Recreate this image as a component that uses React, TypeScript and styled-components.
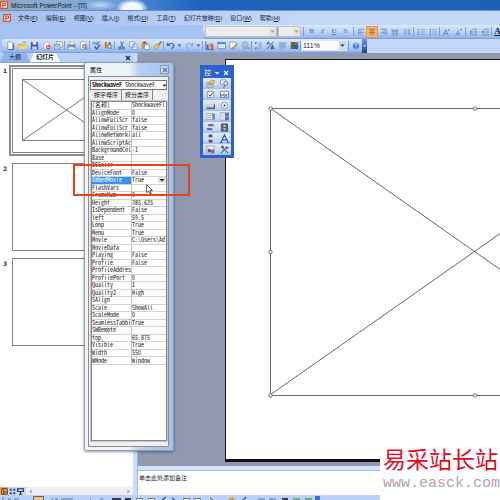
import React from "react";
import styled, { createGlobalStyle } from "styled-components";

const Global = createGlobalStyle`
  *, *::before, *::after { box-sizing: border-box; }
  body { margin: 0; background: #fff; }
  button, select, input, textarea { font: inherit; color: inherit; margin: 0; padding: 0; border: 0; background: none; }
`;

const Page = styled.div`
  position: relative;
  display: flex;
  flex-direction: column;
  height: 100vh;
  overflow: hidden;
  background: #a9c5f3;
  color: #1b2233;
  font: 6px/8px "Liberation Sans", "Noto Sans CJK SC", sans-serif;
`;

const TitleBar = styled.header`
  display: flex;
  align-items: center;
  gap: 3px;
  height: 11px;
  flex: none;
  border-bottom: 1px solid #6f8fbd;
  background:
    radial-gradient(ellipse 18px 5px at 100px 5px, #c9e8f6cc, transparent),
    radial-gradient(ellipse 16px 9px at 132px 8px, #f3fbff 55%, transparent),
    linear-gradient(90deg, #93aac2 0, #86abd6 70px, #6d9fdc 110px, #3f7fd0 150px, #1d62bd 200px, #1a63b4 100%);
`;

const TitleText = styled.h1`
  margin: 0;
  font: 6px/9px Inter, "Liberation Sans", sans-serif;
  color: #0c1524;
  white-space: nowrap;
`;

const MenuBar = styled.nav`
  display: flex;
  align-items: center;
  gap: 8px;
  height: 14px;
  flex: none;
  padding-left: 3px;
  background: linear-gradient(90deg, #a3c0f2, #c3d7f8 60%);
`;

const MenuItem = styled.button`
  white-space: nowrap;
  u { text-underline-offset: 1px; }
`;

const MenuItems = styled.div`
  display: flex;
  gap: 8px;
  margin-left: -1px;
`;

const FormatRow = styled.div`
  height: 14px;
  flex: none;
  display: flex;
  padding-left: 203px;
  background: #a6c3f4;
`;

const StandardRow = styled.div`
  height: 14px;
  flex: none;
  display: flex;
  padding-left: 2px;
  background: linear-gradient(90deg, #a6c3f4, #c3d7f8 60%);
`;

const Bar = styled.div<{ $grow?: boolean }>`
  display: flex;
  align-items: center;
  flex: ${p => (p.$grow ? "1" : "none")};
  min-width: 0;
  overflow: hidden;
  padding-left: 2px;
  border-bottom: 1px solid #7f9fd8;
  border-radius: 3px 0 0 3px;
  background: linear-gradient(#dbe8fd, #bad1f7 55%, #8fb2ec);
`;

const Tool = styled.button<{ $active?: boolean; $w?: number }>`
  width: ${p => p.$w ?? 12}px;
  height: 12px;
  flex: none;
  display: flex;
  align-items: center;
  justify-content: center;
  background: ${p => (p.$active ? "#fbb467" : "none")};
  box-shadow: ${p => (p.$active ? "inset 0 0 0 1px #d59a62" : "none")};
`;

const Sep = styled.i<{ $gap?: number }>`
  width: 1px;
  height: 9px;
  flex: none;
  margin: 0 ${p => p.$gap ?? 0}px;
  background: #7f9ed6;
`;

const Letter = styled.span<{ $size?: number; $color?: string }>`
  font: bold ${p => p.$size ?? 7}px/9px "Liberation Serif", serif;
  color: ${p => p.$color ?? "#7383a8"};
`;

const ComboBox = styled.label<{ $w: number; $off?: boolean }>`
  position: relative;
  display: flex;
  flex: none;
  width: ${p => p.$w}px;
  height: 11px;
  background: ${p => (p.$off ? "#ececee" : "#fff")};
  border: 1px solid ${p => (p.$off ? "#c4c4c4" : "#dfe9fa")};
  select {
    appearance: none;
    width: 100%;
    padding-left: 1px;
    outline: 0;
    font: 7px/9px "Liberation Sans", sans-serif;
    color: #222;
  }
  svg {
    position: absolute;
    right: 0;
    top: 0;
    pointer-events: none;
    background: ${p => (p.$off ? "#e6e3d6" : "#c5d9f9")};
  }
`;

const EndCap = styled.button`
  width: 5px;
  height: 14px;
  background: linear-gradient(#6c97e2, #1c4598);
`;

const Workspace = styled.main`
  flex: 1;
  min-height: 0;
  display: flex;
`;

const SidePane = styled.aside`
  width: 133px;
  flex: none;
  display: flex;
  flex-direction: column;
  background: #fff;
`;

const TabStrip = styled.div`
  height: 10px;
  flex: none;
  display: flex;
  align-items: flex-end;
  background: #b9d1f7;
  border-bottom: 1px solid #8aa4cf;
`;

const PaneTab = styled.button<{ $active?: boolean }>`
  height: 9px;
  width: 30px;
  line-height: 9px;
  color: #10182a;
  font-weight: ${p => (p.$active ? 700 : 400)};
  background: ${p => (p.$active ? "#fff" : "#8fb3ea")};
  clip-path: polygon(4px 0, calc(100% - 4px) 0, 100% 100%, 0 100%);
  white-space: nowrap;
`;

const PaneClose = styled.button`
  margin-left: auto;
  width: 10px;
  height: 9px;
  display: flex;
  align-items: center;
  justify-content: center;
`;

const Thumbs = styled.ol`
  list-style: none;
  margin: 0;
  padding: 2px 5px 0 3px;
  flex: 1;
  display: flex;
  flex-direction: column;
  gap: 7px;
`;

const ThumbItem = styled.li`
  display: flex;
  font: bold 6px/8px "DejaVu Sans", sans-serif;
  color: #333;
  > span { width: 6px; padding-top: 2px; }
`;

const ThumbButton = styled.button<{ $active?: boolean }>`
  flex: 1;
  height: ${p => (p.$active ? 91 : 88)}px;
  padding: ${p => (p.$active ? "1px" : "0 3px")};
  border: ${p => (p.$active ? "2px solid #8b8b8b" : "0")};
  display: flex;
`;

const ThumbPage = styled.span`
  flex: 1;
  align-self: stretch;
  overflow: hidden;
  border: 1px solid #858585;
  background: #fff;
  svg { display: block; }
`;

const ViewRow = styled.div`
  height: 8px;
  flex: none;
  display: flex;
  align-items: center;
  background: #c5d9f8;
`;

const ViewButton = styled.button<{ $active?: boolean }>`
  width: 8px;
  height: 8px;
  display: flex;
  align-items: center;
  justify-content: center;
  background: ${p => (p.$active ? "#f0a45c" : "none")};
`;

const ScrollTrack = styled.div`
  flex: 1;
  height: 8px;
  margin-left: 2px;
  padding: 0 2px;
  background: #efefef;
  display: flex;
  align-items: center;
  justify-content: space-between;
`;

const Splitter = styled.div`
  width: 5px;
  flex: none;
  background: #c9defb;
  border-right: 1px solid #9bb5df;
`;

const Center = styled.section`
  flex: 1;
  min-width: 0;
  display: flex;
  flex-direction: column;
`;

const Stage = styled.div`
  flex: 1;
  min-height: 0;
  display: flex;
  background: #9099ae;
  padding: 6px 0 4px 87px;
`;

const Slide = styled.div`
  flex: 1;
  min-width: 0;
  overflow: hidden;
  background: #fff;
  border: solid #111;
  border-width: 1px 0 3px 1px;
  padding: 45px 0 0 41px;
  svg { display: block; flex: none; }
`;

const NotesSplitter = styled.div`
  height: 5px;
  flex: none;
  background: #d3e3fa;
  border-bottom: 1px solid #9db7de;
`;

const Notes = styled.textarea`
  height: 24px;
  flex: none;
  resize: none;
  outline: 0;
  overflow: hidden;
  padding: 3px 1px;
  background: #fff;
  font: 6px/8px "Noto Sans CJK SC", sans-serif;
  &::placeholder { color: #222; opacity: 1; }
`;

const DrawBar = styled.footer`
  height: 5px;
  flex: none;
  overflow: hidden;
  background: #bad2f7;
  svg { display: block; }
`;

/* floating windows */

const Dialog = styled.section`
  position: absolute;
  left: 84px;
  top: 62px;
  width: 90px;
  height: 389px;
  display: flex;
  flex-direction: column;
  padding: 2px 4px 3px 3px;
  border: 1px solid #8f9db0;
  border-radius: 2px;
  background: linear-gradient(90deg, #f0f4f6 0, #e8f3fa 44px, #b7cff0 54px, #a4c1ed 100%);
  box-shadow: 0 1px 3px #00000066;
`;

const DialogTitle = styled.div`
  height: 11px;
  flex: none;
  display: flex;
  justify-content: space-between;
  padding-left: 2px;
  h2 { margin: 0; font: 6px/10px "Noto Sans CJK SC", sans-serif; color: #000; }
`;

const DialogClose = styled.button`
  width: 9px;
  height: 9px;
  display: flex;
  align-items: center;
  justify-content: center;
  border: 1px solid #8999b4;
  background: #c4d5ee;
`;

const DialogBody = styled.div`
  flex: 1;
  min-height: 0;
  display: flex;
  flex-direction: column;
  border: 1px solid #8b8f94;
  background: #f0f0f0;
  padding: 3px 1px 2px 1px;
`;

const mono = `"Noto Sans Mono CJK SC", "Liberation Mono", monospace`;

const ObjectPicker = styled.button`
  height: 10px;
  flex: none;
  display: flex;
  align-items: center;
  gap: 3px;
  padding-left: 1px;
  border: 1px solid #777;
  background: #fff;
  white-space: nowrap;
  text-align: left;
  color: #111;
  font: 6px/8px ${mono};
  span { flex: 1; }
  svg { flex: none; }
`;

const DialogTabs = styled.div`
  height: 11px;
  flex: none;
  display: flex;
  align-items: flex-start;
  padding-left: 1px;
`;

const DialogTab = styled.button`
  height: 10px;
  padding: 0 3px;
  font: 6px/8px "Noto Sans CJK SC", sans-serif;
  color: #111;
  border-right: 1px solid #888;
`;

const Sheet = styled.div`
  flex: 1;
  min-height: 0;
  margin: 0 0 3px 1px;
  border: 1px solid #85878a;
  background: #fff;
  box-shadow: 0 0 0 1px #c9c9c9;
`;

const PropTable = styled.table`
  width: 100%;
  height: 263px;
  table-layout: fixed;
  border-spacing: 0;
  font: 6px/6px ${mono};
  color: #222;
  th, td {
    padding: 0;
    text-align: left;
    font-weight: 400;
    white-space: nowrap;
    border-bottom: 1px solid #d2d2d2;
  }
  th { width: 40px; border-right: 1px solid #c4c4c4; }
`;

const NameCell = styled.th<{ $active?: boolean }>`
  background: ${p => (p.$active ? "#3291f4" : "none")};
  color: ${p => (p.$active ? "#fff" : "inherit")};
`;

const ValueSelect = styled.span`
  display: flex;
  justify-content: space-between;
  height: 6px;
  select { appearance: none; outline: 0; flex: 1; height: 6px; line-height: 6px; }
`;

const Palette = styled.section`
  position: absolute;
  left: 200px;
  top: 65px;
  width: 34px;
  height: 93px;
  border: 2px solid #2862d3;
  border-bottom-width: 3px;
  background: #2862d3;
  padding: 0 1px;
  display: flex;
  flex-direction: column;
`;

const PaletteHead = styled.div`
  height: 11px;
  flex: none;
  display: flex;
  align-items: center;
  justify-content: space-between;
  padding: 0 2px 0 1px;
  color: #fff;
  font-size: 7px;
  button { display: flex; }
`;

const PaletteGrid = styled.div`
  flex: 1;
  display: grid;
  grid-template-columns: 1fr 1fr;
  grid-auto-rows: 11px;
`;

const PaletteButton = styled.button`
  display: flex;
  align-items: center;
  justify-content: center;
  background: linear-gradient(#e0ebfe, #c3d8f9 70%, #9dbdf0);
`;

const Highlight = styled.div`
  position: absolute;
  left: 73px;
  top: 164px;
  width: 117px;
  height: 32px;
  border: 2px solid #e8431c;
`;

const Pointer = styled.svg`
  position: absolute;
  left: 146px;
  top: 184px;
`;

const Stamp = styled.a`
  position: absolute;
  right: 0;
  bottom: 0;
  width: 120px;
  height: 60px;
  padding: 1px 0 0 3px;
  background: #fff;
  text-decoration: none;
  white-space: nowrap;
`;

const StampName = styled.span`
  display: block;
  font: 23px/34px "Noto Sans CJK SC", sans-serif;
  color: #e60a1e;
`;

const StampUrl = styled.span`
  display: block;
  font: 15px/18px "Liberation Mono", monospace;
  color: #b5a3a3;
`;

type G = { s?: number; children: React.ReactNode };
const Glyph = ({ s = 10, children }: G) => (
  <svg width={s} height={s} viewBox="0 0 10 10" fill="none" aria-hidden="true">{children}</svg>
);

const Down = ({ c = "#222", w = 7, h = 9 }: { c?: string; w?: number; h?: number }) => (
  <svg width={w} height={h} viewBox="0 0 7 9" aria-hidden="true"><path d="M1.5 3.5h4L3.500 5.800z" fill={c} /></svg>
);

const Cross = ({ c, s = 6 }: { c: string; s?: number }) => (
  <svg width={s} height={s} viewBox="0 0 6 6" aria-hidden="true"><path d="M1 1l4 4M5 1L1 5" stroke={c} strokeWidth="1.200" /></svg>
);

const PptIcon = ({ s = 8 }: { s?: number }) => (
  <Glyph s={s}>
    <rect x="0" y="0" width="10" height="10" rx="1" fill="#d2562a" />
    <rect x="1.500" y="1.500" width="7" height="7" fill="#fbe3d5" />
    <path d="M3.500 8V2.500h2a1.500 1.500 0 010 3h-2" stroke="#c8451e" strokeWidth="1.300" />
  </Glyph>
);

const icons: Record<string, React.ReactNode> = {
  new: <><path d="M2 1h4l2 2v6.500H2z" fill="#fff" stroke="#7a8aac" strokeWidth=".8" /><path d="M8 3v6.500H3" stroke="#33466e" /></>,
  open: <><path d="M0.500 9V3h3l1 1h4v5z" fill="#e8a92e" /><path d="M2 5h8L8 9H.5z" fill="#ffd866" /><path d="M5 2q2-2 4 .5" stroke="#3f9a48" /></>,
  save: <><path d="M1 1h8v8.500H1z" fill="#4b56c0" /><path d="M3 1h4v3H3z" fill="#f4f6ff" /><path d="M2.500 6h5v3.500h-5z" fill="#cdd5f2" /></>,
  perm: <><path d="M2 1h4l2 2v6H2z" fill="#fff" stroke="#8b96ad" strokeWidth=".7" /><circle cx="7" cy="7" r="2.500" fill="#dd4a32" /><path d="M5.500 7h3" stroke="#fff" /></>,
  mail: <><path d="M3 .5h5l1.500 2V7H3z" fill="#eef2fb" stroke="#7c8aac" strokeWidth=".7" /><path d="M.5 4h6v5h-6z" fill="#d3dcf0" stroke="#6a7897" strokeWidth=".7" /><path d="M.5 4l3 3 3-3" stroke="#6a7897" strokeWidth=".7" /></>,
  print: <><path d="M3 1h5v3H3z" fill="#fff" stroke="#7c8aac" strokeWidth=".6" /><path d="M.5 4h9v4h-9z" fill="#8590a8" /><path d="M2 7h6v2H2z" fill="#e9eefa" /><path d="M6.500 5.500H9" stroke="#36b050" strokeWidth="1.500" /></>,
  preview: <><path d="M1.500.5h4l2 2V9h-6z" fill="#fff" stroke="#7c8aac" strokeWidth=".7" /><circle cx="6" cy="6" r="2" fill="#bcd3f2" stroke="#4c5872" /><path d="M7.500 7.500l2 2" stroke="#b8862c" strokeWidth="1.300" /></>,
  spell: <><path d="M.5 4l1.500-3L3.500 4M4.500 1v3h1.500V1M7 4V1h2" stroke="#5a6682" strokeWidth=".8" /><path d="M3 6l2 3 4-5" stroke="#2f58c0" strokeWidth="1.500" /></>,
  research: <><path d="M1 1h2v7H1z" fill="#c85a3a" /><path d="M3 1h2.500v7H3z" fill="#e4c455" /><path d="M5.500 1h2v7h-2z" fill="#506cc0" /><circle cx="6" cy="6" r="2" fill="#dfe9fa" stroke="#566" /><path d="M7.500 7.500l2 2" stroke="#b8862c" /></>,
  cut: <><path d="M7.500 0.500L3.500 7M4 .5L6.500 7" stroke="#52648c" /><circle cx="3" cy="8" r="1.300" stroke="#2f58c0" /><circle cx="7" cy="8" r="1.300" stroke="#2f58c0" /></>,
  copy: <><path d="M.8.8h5v6h-5zM3.800 3.500h5v6h-5z" fill="#f5f8ff" stroke="#7690c4" strokeWidth=".8" /><path d="M5 5.500h2.500M5 7h2.500" stroke="#8fa5d2" strokeWidth=".6" /></>,
  paste: <><path d="M.8 1.500h6.500v7.500H.8z" fill="#d69440" /><path d="M2.500.5h3v2h-3z" fill="#6c5a43" /><path d="M4 4h5.500v5.500H4z" fill="#f4f7ff" stroke="#6e82ad" strokeWidth=".7" /></>,
  brush: <><path d="M9.500.5L6 4.500" stroke="#8a6838" strokeWidth="1.500" /><path d="M4 3l3 3-3 3.500L.8 7z" fill="#f0c64a" stroke="#a8862a" strokeWidth=".6" /></>,
  undo: <><path d="M2 4.500q4-4 6.500 0 .5 3-2.500 4" stroke="#2f62d0" strokeWidth="1.300" /><path d="M1 1.500v4h4z" fill="#2f62d0" /></>,
  redo: <><path d="M8 4.500q-4-4-6.500 0-.5 3 2.500 4" stroke="#92a9d2" strokeWidth="1.300" /><path d="M9 1.500v4H5z" fill="#92a9d2" /></>,
  chart: <><path d="M.8.500v9H10" stroke="#5c6a8a" /><path d="M2 4h2v5H2z" fill="#3b62c8" /><path d="M4.500 2h2v7h-2z" fill="#e2b02e" /><path d="M7 3h2v6H7z" fill="#d6452e" /></>,
  table: <><path d="M1 1.500h8.500v7H1z" fill="#fff" stroke="#5876b4" strokeWidth=".8" /><path d="M1 1.500h8.500v2H1z" fill="#5a83d8" /><path d="M1 6h8M4 3v5M7 3v5" stroke="#a9bde0" strokeWidth=".6" /></>,
  tborder: <><path d="M1 1h7v7H1z" fill="#f4f7fc" stroke="#7d8fb4" strokeWidth=".8" /><path d="M9.500 3L5 8.500 3 9.500l1-2.500z" fill="#e0a83c" stroke="#7d6435" strokeWidth=".5" /></>,
  link: <><circle cx="4.500" cy="4" r="3.300" fill="#b2c3df" stroke="#8ea2c6" /><path d="M3 8h3m1 0h3" stroke="#8595b3" strokeWidth="2" /></>,
  expand: <><path d="M1 1h2v2H1zM1 7h2v2H1z" fill="#6d82ad" /><path d="M4 2h5M5 4h4M5 6h4M4 8h5" stroke="#8094bd" strokeWidth=".8" /></>,
  fmt: <><path d="M1 9L8 1" stroke="#4a5678" /><path d="M1 4l1.500-3L4 4" stroke="#333f5d" /><path d="M5.500 9l1.500-4 2 4M6 8h3" stroke="#2d4db0" strokeWidth="1.200" /></>,
  grid: <><path d="M1 1h8v8H1z" fill="#9bbbe9" /><path d="M1 3.500h8M1 6h8M3.500 1v8M6 1v8" stroke="#7196d5" strokeWidth=".5" /></>,
  color: <><path d="M1 1h8v8H1z" fill="#334" /><path d="M1 1h4v4H1z" fill="#d93325" /><path d="M5 1h4v4H5z" fill="#34a53c" /><path d="M1 5h4v4H1z" fill="#1a8f3c" /><path d="M5 5h4v4H5z" fill="#2d55c4" /></>,
  help: <><circle cx="5" cy="5" r="4" fill="#3c6fd8" stroke="#9fbced" strokeWidth=".7" /><path d="M3.500 4q0-1.500 1.500-1.500T6.500 4Q5 4.500 5 6M5 7v1" stroke="#fff" /></>,
  left: <path d="M1 1.500h8M1 3.500h5M1 5.500h8M1 7.500h5" stroke="#7488b3" />,
  center: <path d="M1 1.500h8M2.500 3.500h5M1 5.500h8M2.500 7.500h5" stroke="#8a6434" />,
  right: <path d="M1 1.500h8M4 3.500h5M1 5.500h8M4 7.500h5" stroke="#7488b3" />,
  dist: <path d="M1 1v2h8V1M1 4.500h8M1 6.500h8M1 8.500h8M3 1v8M7 1v8" stroke="#7488b3" strokeWidth=".8" />,
  vert: <path d="M1.500 1v8M4 1v8M6.500 1v6M8 1v6l1 2M6 8h4" stroke="#7488b3" strokeWidth=".8" />,
  nums: <><path d="M1.500 1v2M1.500 4v2M1.500 7v2" stroke="#5d72a3" /><path d="M4 2h6M4 5h6M4 8h6" stroke="#8498c2" strokeWidth=".9" /></>,
  bullets: <><path d="M1 2h1.500M1 5h1.500M1 8h1.500" stroke="#5d72a3" strokeWidth="1.500" /><path d="M4 2h6M4 5h6M4 8h6" stroke="#8498c2" strokeWidth=".9" /></>,
  grow: <><path d="M0.500 9.500L3.500 2l3 7.500M1.500 7h4" stroke="#7383a8" strokeWidth="1.200" /><path d="M6 3l1.500-2L9 3z" fill="#5a6c98" /></>,
  shrink: <><path d="M1 9.500l2.500-6 2.500 6M2 7.500h3" stroke="#7383a8" /><path d="M6 1.500h3L7.500 3.500z" fill="#5a6c98" /></>,
  outdent: <><path d="M4 1.500h6M6 4h4M6 6h4M1 8.500h9" stroke="#7488b3" /><path d="M5 5H1m2-2L1 5l2 2" stroke="#5470ac" /></>,
  indent: <><path d="M4 1.500h6M6 4h4M6 6h4M1 8.500h9" stroke="#7488b3" /><path d="M0 5h4M2.500 3l2 2-2 2" stroke="#5470ac" /></>,
};

const I = ({ n, s }: { n: string; s?: number }) => <Glyph s={s}>{icons[n]}</Glyph>;

const standard: (string | null)[] = [
  "new", "open", "save", "perm", "mail", null, "print", "preview", null, "spell", "research", null,
  "cut", "copy", "paste", "brush", null, "undo", "v", "redo", "v", null,
  "chart", "table", "tborder", "link", null, "expand", "fmt", "grid", "color", null,
];

const menus: [string, string][] = [
  ["文件", "F"], ["编辑", "E"], ["视图", "V"], ["插入", "I"], ["格式", "O"],
  ["工具", "T"], ["幻灯片放映", "D"], ["窗口", "W"], ["帮助", "H"],
];

const props: [string, string][] = [
  ["(名称)", "ShockwaveFl"], ["AlignMode", "0"], ["AllowFullScr", "false"], ["AllowFullScr", "false"],
  ["AllowNetworki", "all"], ["AllowScriptAc", ""], ["BackgroundCol", "-1"], ["Base", ""], ["BGColor", ""],
  ["DeviceFont", "False"], ["EmbedMovie", "True"], ["FlashVars", ""], ["FrameNum", "0"], ["Height", "385.625"],
  ["IsDependent", "False"], ["left", "59.5"], ["Loop", "True"], ["Menu", "True"], ["Movie", "C:\\Users\\Ad"],
  ["MovieData", ""], ["Playing", "False"], ["Profile", "False"], ["ProfileAddres", ""], ["ProfilePort", "0"],
  ["Quality", "1"], ["Quality2", "High"], ["SAlign", ""], ["Scale", "ShowAll"], ["ScaleMode", "0"],
  ["SeamlessTabbi", "True"], ["SWRemote", ""], ["top", "65.875"], ["Visible", "True"], ["Width", "550"],
  ["WMode", "Window"],
];

const palette: [string, React.ReactNode][] = [
  ["属性", <><path d="M1 4h7v5H1z" fill="#f6f0dc" stroke="#7d7350" strokeWidth=".8" /><path d="M3 5l3-4 4 1-2 3z" fill="#e8c440" stroke="#8e7a2c" strokeWidth=".6" /><path d="M2 6.500h5" stroke="#55617c" /></>],
  ["查看代码", <><path d="M.5 1h6v5h-6z" fill="#eef3fc" stroke="#7184aa" strokeWidth=".8" /><circle cx="6.500" cy="5" r="2.300" fill="#cfe0f5" stroke="#6a7890" /><path d="M5.500 7L4 9.500" stroke="#5b6478" strokeWidth="1.300" /></>],
  ["复选框", <><path d="M1.500 1.500h7v7h-7z" fill="#fff" stroke="#8a8f9c" /><path d="M3 5l1.500 2L7.500 3" stroke="#333" strokeWidth="1.100" /></>],
  ["文本框", <><path d="M.5 1.500h9v7h-9z" fill="#fff" stroke="#6c7a95" /><path d="M2 7V5h1.500v2M4.500 3v4H6V5M8.500 5H7v2h1" stroke="#3b4964" strokeWidth=".8" /></>],
  ["命令按钮", <><path d="M.5 4h9v4h-9z" fill="#8c929e" /><path d="M.5 3.500h8v3h-8z" fill="#d2d6de" /><path d="M9.500 4v4.500h-9" stroke="#444b59" /></>],
  ["选项按钮", <><circle cx="5" cy="5" r="3.500" fill="#f9fbff" stroke="#868e9d" /><circle cx="5" cy="5" r="1.200" fill="#333" /></>],
  ["列表框", <><path d="M0 2h10v6H0z" fill="#fff" stroke="#7a8499" strokeWidth=".8" /><path d="M1 4h5M1 6h5" stroke="#8792aa" strokeWidth=".8" /><path d="M7 2h3v6H7z" fill="#7985a0" /></>],
  ["组合框", <><path d="M0 1h10v8H0z" fill="#fff" stroke="#7a8499" strokeWidth=".8" /><path d="M5.500 1H10v8H5.500z" fill="#6279a8" /><path d="M1 3h4M1 5h4M1 7h4M6.500 5h2.500" stroke="#a9b8d6" strokeWidth=".8" /></>],
  ["切换按钮", <><path d="M2.500 1h6v2.500h-6zM1 5.500h6V8H1z" fill="#66728c" /><path d="M2 4h5.500" stroke="#b4bccb" /></>],
  ["数值调节钮", <><path d="M1 .5h8v9H1z" fill="#555c69" /><path d="M3 4l2-2 2 2zM3 6l2 2 2-2z" fill="#e6e8ee" /></>],
  ["滚动条", <><path d="M3 .5h4v9H3z" fill="#dfe3ea" /><path d="M3 .5h4v3H3zM3 6.500h4v3H3z" fill="#4a4f5a" /></>],
  ["标签", <path d="M1 9.500L5 .8l4 8.700M2.500 6.500h5M0 9.500h2.500M7.500 9.500H10" stroke="#3a5a94" strokeWidth="1.200" />],
  ["图像", <><path d="M1 1h8v8H1z" fill="#eaf0fb" stroke="#7a8bb0" strokeWidth=".8" /><path d="M2 8V5l2-1 2 2V8z" fill="#3859a5" /><path d="M6 5h3v4H6z" fill="#c2523c" /></>],
  ["其他控件", <><path d="M1 9l6-6M3 3l6 6" stroke="#6a6f7a" strokeWidth="1.400" /><path d="M1 2q1-2 3-1l.5 2.500L2 4zM7 1l3 2-1.500 1.500L6 3z" fill="#5b6170" /></>],
];

const Wire = ({ w, h }: { w: number; h: number }) => {
  const pts = [[0, 0], [w / 2, 0], [w, 0], [0, h / 2], [w, h / 2], [0, h], [w / 2, h], [w, h]];
  return (
    <svg width={w + 6} height={h + 6} viewBox={`-3 -3 ${w + 6} ${h + 6}`} fill="none" aria-hidden="true">
      <path d={`M.5.5H${w + 0.5}V${h + 0.5}H.5zM0 0L${w} ${h}M0 ${h}L${w} 0`} stroke="#666" />
      {pts.map(([x, y]) => (
        <circle key={`${x}-${y}`} cx={x + 0.5} cy={y + 0.5} r="1.700" fill="#fff" stroke="#555" strokeWidth=".8" />
      ))}
    </svg>
  );
};

export default function App() {
  return (
    <Page>
      <Global />
      <TitleBar>
        <PptIcon />
        <TitleText>Microsoft PowerPoint - [11]</TitleText>
      </TitleBar>
      <MenuBar aria-label="菜单">
        <Tool $w={8} aria-label="控制菜单"><PptIcon /></Tool>
        <MenuItems>
          {menus.map(([t, k]) => <MenuItem key={k}>{t}(<u>{k}</u>)</MenuItem>)}
        </MenuItems>
      </MenuBar>

      <FormatRow>
        <Bar $grow role="toolbar" aria-label="格式">
          <ComboBox $w={72} $off><select aria-label="字体" disabled /><Down c="#a09a86" /></ComboBox>
          <Sep />
          <ComboBox $w={23} $off><select aria-label="字号" disabled /><Down c="#a09a86" /></ComboBox>
          <Sep $gap={2} />
          <Tool $w={11}><Letter>B</Letter></Tool>
          <Tool $w={11}><Letter><i>I</i></Letter></Tool>
          <Tool $w={12}><Letter><u>U</u></Letter></Tool>
          <Tool $w={11}><Letter>S</Letter></Tool>
          <Sep $gap={2} />
          <Tool $w={10} aria-label="左对齐"><I n="left" s={8} /></Tool>
          <Tool $active aria-label="居中"><I n="center" s={8} /></Tool>
          <Tool $w={11} aria-label="右对齐"><I n="right" s={8} /></Tool>
          <Tool aria-label="分散对齐"><I n="dist" s={8} /></Tool>
          <Tool $w={11} aria-label="文字方向"><I n="vert" s={8} /></Tool>
          <Sep $gap={1} />
          <Tool aria-label="编号"><I n="nums" s={8} /></Tool>
          <Tool $w={11} aria-label="项目符号"><I n="bullets" s={8} /></Tool>
          <Sep $gap={1} />
          <Tool aria-label="增大字号"><I n="grow" s={8} /></Tool>
          <Tool $w={11} aria-label="减小字号"><I n="shrink" s={8} /></Tool>
          <Sep $gap={1} />
          <Tool aria-label="减少缩进"><I n="outdent" s={8} /></Tool>
          <Tool aria-label="增加缩进"><I n="indent" s={8} /></Tool>
          <Sep />
          <Tool $w={11}><Letter $size={9} $color="#18233f"><u>A</u></Letter></Tool>
        </Bar>
      </FormatRow>

      <StandardRow>
        <Bar role="toolbar" aria-label="常用">
          {standard.map((n, i) =>
            n === null ? <Sep key={i} /> :
            n === "v" ? <Tool key={i} $w={7} aria-label="更多"><Down c="#4b5d86" /></Tool> :
            <Tool key={i} aria-label={n}><I n={n} s={9} /></Tool>
          )}
          <ComboBox $w={46}>
            <select aria-label="显示比例" defaultValue="111%"><option>111%</option></select>
            <Down />
          </ComboBox>
          <Sep $gap={1} />
          <Tool aria-label="帮助"><I n="help" s={8} /></Tool>
        </Bar>
        <EndCap aria-label="工具栏选项"><Down c="#fff" w={5} h={14} /></EndCap>
      </StandardRow>

      <Workspace>
        <SidePane>
          <TabStrip role="tablist">
            <PaneTab role="tab">大纲</PaneTab>
            <PaneTab role="tab" $active aria-selected>幻灯片</PaneTab>
            <PaneClose aria-label="关闭窗格"><Cross c="#222" /></PaneClose>
          </TabStrip>
          <Thumbs>
            <ThumbItem>
              <span>1</span>
              <ThumbButton $active aria-label="幻灯片 1"><ThumbPage>
                <svg width="100" height="80" fill="none" aria-hidden="true">
                  <path d="M9.500 10.500H97.500V71.500H9.500zM9.500 10.500L97.500 71.500M9.500 71.500L97.500 10.500" stroke="#555" strokeWidth=".8" />
                </svg>
              </ThumbPage></ThumbButton>
            </ThumbItem>
            <ThumbItem><span>2</span><ThumbButton aria-label="幻灯片 2"><ThumbPage /></ThumbButton></ThumbItem>
            <ThumbItem><span>3</span><ThumbButton aria-label="幻灯片 3"><ThumbPage /></ThumbButton></ThumbItem>
          </Thumbs>
          <ViewRow>
            <ViewButton $active aria-label="普通视图"><Glyph s={7}><path d="M1 1h8v8H1zM4 1v8M4 6h5" stroke="#5a3d22" strokeWidth="1.300" /></Glyph></ViewButton>
            <ViewButton aria-label="浏览视图"><Glyph s={7}><path d="M1 1h3v3H1zM6 1h3v3H6zM1 6h3v3H1zM6 6h3v3H6z" fill="#3c4a68" /></Glyph></ViewButton>
            <ViewButton aria-label="放映"><Glyph s={7}><path d="M0 1h10M1 1v4h8V1M5 5v4M3 9h4" stroke="#222c42" strokeWidth="1.500" /></Glyph></ViewButton>
            <ScrollTrack>
              <Glyph s={5}><path d="M7 1L3 5l4 4z" fill="#888" /></Glyph>
              <Glyph s={5}><path d="M3 1l4 4-4 4z" fill="#888" /></Glyph>
            </ScrollTrack>
          </ViewRow>
        </SidePane>
        <Splitter />
        <Center>
          <Stage><Slide><Wire w={409} h={287} /></Slide></Stage>
          <NotesSplitter />
          <Notes aria-label="备注" placeholder="单击此处添加备注" />
        </Center>
      </Workspace>

      <DrawBar>
        <svg width="330" height="5" fill="none" aria-hidden="true">
          <path d="M33.500 6V1.500h10V6" fill="#fbc27a" stroke="#47619e" />
          <path d="M3 2v3M8 4h3M14 4h5M52 3v2M55 4h3M61 4h12M90 4h1M100 4h3M258 4h7M269 4h7" stroke="#5b6f9c" />
          <path d="M112 4h9M125 4h6M282 4h6" stroke="#333c50" strokeWidth="2" />
          <path d="M136.500 5V3.500h6V5M148.500 5V3.500h6V5M183.500 5V3.500h6V5M194.500 5V3.500h6V5" fill="#fff" stroke="#66799f" />
          <path d="M162 5l4-3M172 3l3 2M243 5l3-3" stroke="#2f58c0" strokeWidth="1.500" />
          <path d="M210 3l3 2" stroke="#444" /><path d="M229 5l3-2 2 2" stroke="#d99a2c" strokeWidth="2" />
          <path d="M293 4h7M305 4h7" stroke="#6fa879" strokeWidth="2" />
          <path d="M315 1h5v4h-5z" fill="#3c6fd0" />
        </svg>
      </DrawBar>

      <Dialog aria-label="属性">
        <DialogTitle><h2>属性</h2><DialogClose aria-label="关闭"><Cross c="#66758f" /></DialogClose></DialogTitle>
        <DialogBody>
          <ObjectPicker aria-haspopup="listbox"><b>ShockwaveF</b><span>ShockwaveF.</span><Down /></ObjectPicker>
          <DialogTabs role="tablist">
            <DialogTab role="tab" aria-selected>按字母序</DialogTab>
            <DialogTab role="tab">按分类序</DialogTab>
          </DialogTabs>
          <Sheet>
            <PropTable>
              <tbody>
                {props.map(([k, v], i) => (
                  <tr key={i}>
                    <NameCell scope="row" $active={k === "EmbedMovie"}>{k}</NameCell>
                    <td>
                      {k === "EmbedMovie" ? (
                        <ValueSelect>
                          <select aria-label={k} defaultValue={v}><option>True</option><option>False</option></select>
                          <svg width="8" height="6" aria-hidden="true"><path d="M0 0h8v6H0z" fill="#e2e2e2" /><path d="M1.500 2h5L4 4.500z" fill="#111" /></svg>
                        </ValueSelect>
                      ) : v}
                    </td>
                  </tr>
                ))}
              </tbody>
            </PropTable>
          </Sheet>
        </DialogBody>
      </Dialog>

      <Palette aria-label="控件工具箱">
        <PaletteHead>控<button aria-label="选项"><Down c="#fff" w={8} h={10} /></button><button aria-label="关闭"><Cross c="#fff" /></button></PaletteHead>
        <PaletteGrid>
          {palette.map(([label, g]) => <PaletteButton key={label} aria-label={label}><Glyph s={9}>{g}</Glyph></PaletteButton>)}
        </PaletteGrid>
      </Palette>

      <Highlight />
      <Pointer width="8" height="11" viewBox="0 0 8 11" aria-hidden="true">
        <path d="M.7.700v8l2-1.700 1.300 3 1.300-.6L4 6.500h2.500z" fill="#fff" stroke="#444" strokeWidth=".9" />
      </Pointer>

      <Stamp href="#"><StampName>易采站长站</StampName><StampUrl>www.easck.com</StampUrl></Stamp>
    </Page>
  );
}
